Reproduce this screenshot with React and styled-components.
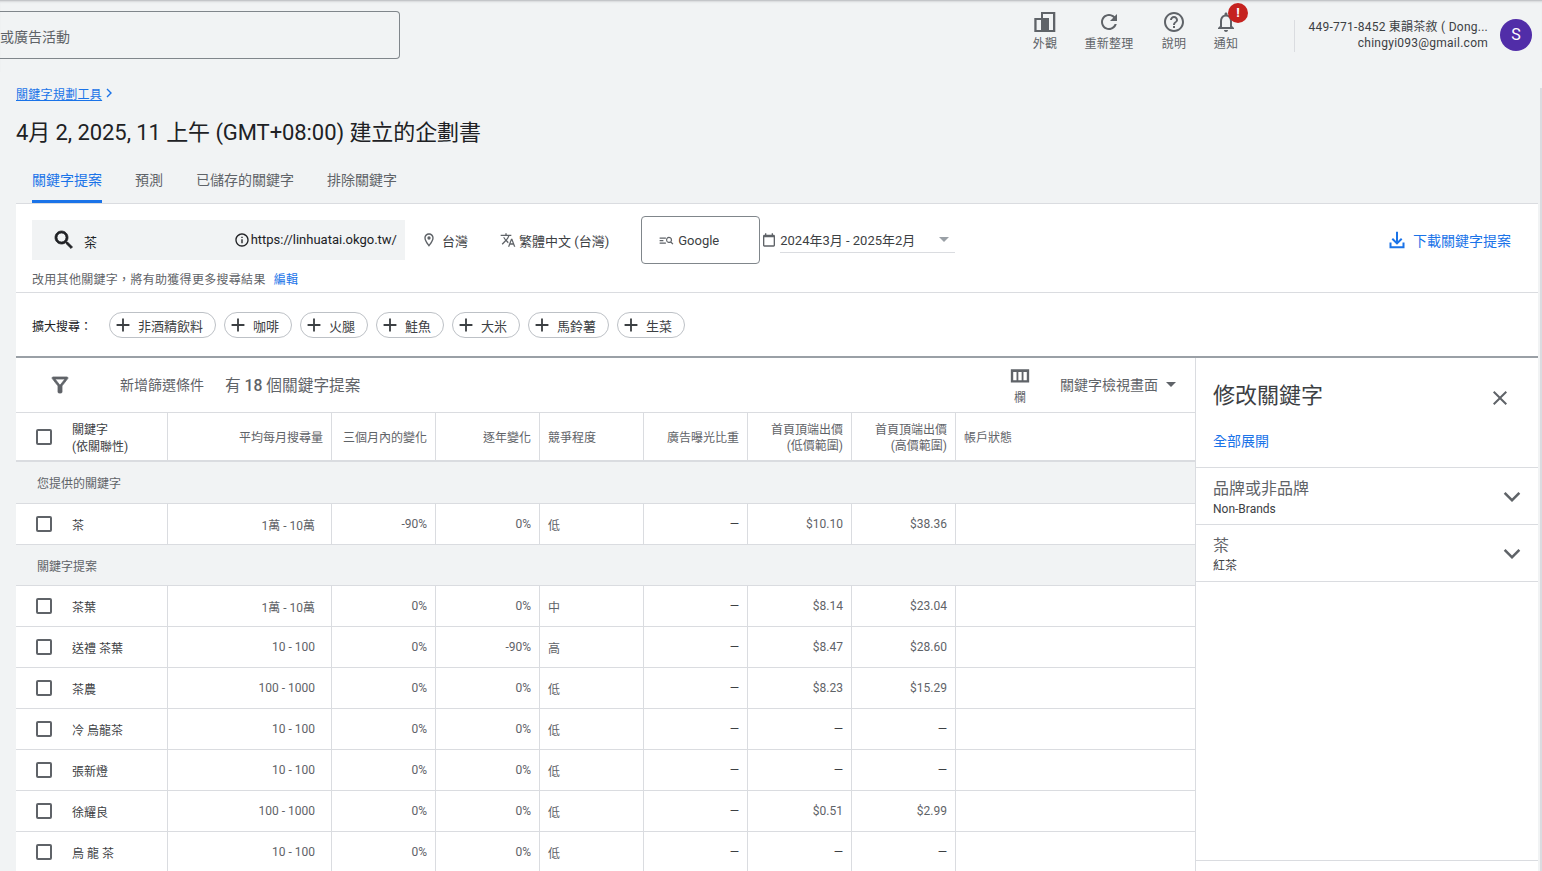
import React from 'react'
import styled, { createGlobalStyle } from 'styled-components'

const GlobalStyle = createGlobalStyle`
  html, body { margin: 0; padding: 0; height: 100%; overflow: hidden; background: #f1f3f4; }
  body { font-family: Roboto, "Noto Sans CJK TC", sans-serif; color: #3c4043; }
`

const paths = {
  refresh: 'M17.65 6.35C16.2 4.9 14.21 4 12 4c-4.42 0-7.99 3.58-7.99 8s3.57 8 7.99 8c3.73 0 6.84-2.55 7.73-6h-2.08c-.82 2.33-3.04 4-5.65 4-3.31 0-6-2.69-6-6s2.69-6 6-6c1.66 0 3.14.69 4.22 1.78L13 11h7V4l-2.35 2.35z',
  help: 'M11 18h2v-2h-2v2zm1-16C6.48 2 2 6.48 2 12s4.48 10 10 10 10-4.48 10-10S17.52 2 12 2zm0 18c-4.41 0-8-3.59-8-8s3.59-8 8-8 8 3.59 8 8-3.59 8-8 8zm0-14c-2.21 0-4 1.79-4 4h2c0-1.1.9-2 2-2s2 .9 2 2c0 2-3 1.75-3 5h2c0-2.25 3-2.5 3-5 0-2.21-1.79-4-4-4z',
  bell: 'M12 22c1.1 0 2-.9 2-2h-4c0 1.1.89 2 2 2zm6-6v-5c0-3.07-1.64-5.64-4.5-6.32V4c0-.83-.67-1.5-1.5-1.5s-1.5.67-1.5 1.5v.68C7.63 5.36 6 7.92 6 11v5l-2 2v1h16v-1l-2-2zm-2 1H8v-6c0-2.48 1.51-4.5 4-4.5s4 2.02 4 4.5v6z',
  appearance: 'M1.3 8H8V2h14.3v20H1.3V8zM3.6 10v10H8V10H3.6zM10 4v4h6v12h4V4H10z',
  search: 'M15.5 14h-.79l-.28-.27C15.41 12.59 16 11.11 16 9.5 16 5.91 13.09 3 9.5 3S3 5.91 3 9.5 5.91 16 9.5 16c1.61 0 3.09-.59 4.23-1.57l.27.28v.79l5 4.99L20.49 19l-4.99-5zm-6 0C7.01 14 5 11.99 5 9.5S7.01 5 9.5 5 14 7.01 14 9.5 11.99 14 9.5 14z',
  info: 'M11 7h2v2h-2zm0 4h2v6h-2zm1-9C6.48 2 2 6.48 2 12s4.48 10 10 10 10-4.48 10-10S17.52 2 12 2zm0 18c-4.41 0-8-3.59-8-8s3.59-8 8-8 8 3.59 8 8-3.59 8-8 8z',
  place: 'M12 2C8.13 2 5 5.13 5 9c0 5.25 7 13 7 13s7-7.75 7-13c0-3.87-3.13-7-7-7zM7 9c0-2.76 2.24-5 5-5s5 2.24 5 5c0 2.88-2.88 7.19-5 9.88C9.92 16.21 7 11.85 7 9zm5-2.5a2.5 2.5 0 1 0 0 5 2.5 2.5 0 0 0 0-5z',
  translate: 'M12.87 15.07l-2.54-2.51.03-.03c1.74-1.94 2.98-4.17 3.71-6.53H17V4h-7V2H8v2H1v1.99h11.17C11.5 7.92 10.44 9.75 9 11.35 8.07 10.32 7.3 9.19 6.69 8h-2c.73 1.63 1.73 3.17 2.98 4.56l-5.09 5.02L4 19l5-5 3.11 3.11.76-2.04zM18.5 10h-2L12 22h2l1.12-3h4.75L21 22h2l-4.5-12zm-2.62 7l1.62-4.33L19.12 17h-3.24z',
  network: 'M1 7h10v2H1V7zm0 4h6v2H1v-2zm0 4h10v2H1v-2zM16 6a5 5 0 0 1 4 8l3 3-1.4 1.4-3-3A5 5 0 1 1 16 6zm0 2a3 3 0 1 0 0 6 3 3 0 0 0 0-6z',
  calendar: 'M19 4h-1V2h-2v2H8V2H6v2H5c-1.11 0-2 .9-2 2v14c0 1.1.89 2 2 2h14c1.1 0 2-.9 2-2V6c0-1.1-.9-2-2-2zm0 16H5V8h14v12z',
  download: 'M10.8 2h2.4v11.2l3.6-3.6 1.7 1.7L12 17.8l-6.5-6.5 1.7-1.7 3.6 3.6V2zM3 15h2.4v4.6h13.2V15H21v7H3v-7z',
  filter: 'M7 6h10l-5.01 6.3L7 6zm-2.75-.39C6.27 8.2 10 13 10 13v6c0 .55.45 1 1 1h2c.55 0 1-.45 1-1v-6s3.73-4.8 5.75-7.39C20.26 4.95 19.79 4 18.95 4H5.04c-.83 0-1.3.95-.79 1.61z',
  columns: 'M2 4.5h20v14.5H2V4.5zM4.6 7.5v9h3.6v-9H4.6zm5.6 0v9h3.6v-9h-3.6zm5.6 0v9h3.6v-9h-3.6z',
  close: 'M19 6.41L17.59 5 12 10.59 6.41 5 5 6.41 10.59 12 5 17.59 6.41 19 12 13.41 17.59 19 19 17.59 13.41 12z',
  chevron: 'M3.4 6.6L12 15.2l8.6-8.6L23 9 12 20 1 9z',
  plus: 'M19 13h-6v6h-2v-6H5v-2h6V5h2v6h6v2z',
}

const Svg = styled.svg`
  display: block;
  flex: none;
  width: ${p => p.$size}px;
  height: ${p => p.$size}px;
  fill: ${p => p.$color};
  stroke: ${p => (p.$bold ? p.$color : 'none')};
  stroke-width: ${p => (p.$bold ? 0.8 : 0)};
`

const Icon = ({ name, size = 24, color = '#5f6368', bold }) => (
  <Svg viewBox="0 0 24 24" $size={size} $color={color} $bold={bold}>
    <path d={paths[name]} fillRule="evenodd" />
  </Svg>
)

const Page = styled.div`
  position: relative;
  width: 1542px;
  height: 871px;
  overflow: hidden;
  display: flex;
  flex-direction: column;
  background: #f1f3f4;
`

const EdgeLine = styled.div`
  position: absolute;
  top: 88px;
  right: 0;
  bottom: 0;
  width: 2px;
  background: #dadce0;
`

const TopBar = styled.header`
  flex: none;
  height: 72px;
  box-sizing: border-box;
  display: flex;
  align-items: flex-start;
  border-top: 1px solid #c4c6c9;
  box-shadow: inset 0 2px 2px -1px #d5d7da;
  padding: 10px 10px 0 0;
`

const AccountSearch = styled.div`
  width: 400px;
  height: 48px;
  box-sizing: border-box;
  border: 1px solid #80868b;
  border-left: none;
  border-radius: 0 4px 4px 0;
  display: flex;
  align-items: center;
  padding-top: 2px;
  font-size: 14px;
  color: #5f6368;
`

const ToolGroup = styled.div`
  margin-left: auto;
  display: flex;
  position: relative;
  margin-top: -1px;
`

const Tool = styled.div`
  width: ${p => p.$w}px;
  display: flex;
  flex-direction: column;
  align-items: center;
  gap: 2px;
  font-size: 12px;
  line-height: 16px;
  letter-spacing: 0.2px;
  color: #5f6368;
  position: relative;
`

const Badge = styled.span`
  position: absolute;
  top: -7px;
  left: 21px;
  width: 20px;
  height: 20px;
  border-radius: 50%;
  background: #c5221f;
  color: #fff;
  font-size: 13px;
  font-weight: 700;
  line-height: 20px;
  text-align: center;
`

const Divider = styled.div`
  width: 1px;
  height: 32px;
  margin: 9px 13px 0 49px;
  background: #dadce0;
`

const Account = styled.div`
  width: 180px;
  margin-top: 8px;
  font-size: 12px;
  line-height: 16px;
  color: #3c4043;
  letter-spacing: 0.25px;
`

const AccountLine = styled.div`
  display: flex;
  justify-content: flex-end;
  white-space: pre;
`

const Avatar = styled.div`
  width: 32px;
  height: 32px;
  margin: 8px 0 0 12px;
  border-radius: 50%;
  background: #512da8;
  color: #fff;
  font-size: 16px;
  line-height: 32px;
  text-align: center;
`

const PageHead = styled.div`
  flex: none;
  padding: 13px 0 0 16px;
`

const Crumb = styled.div`
  display: flex;
  align-items: center;
  height: 16px;
  font-size: 12px;
  letter-spacing: 0.3px;
  color: #1a73e8;
  span { text-decoration: underline; }
  svg { margin-left: 2px; }
`

const Title = styled.h1`
  margin: 16px 0 0;
  height: 32px;
  font-size: 22px;
  line-height: 32px;
  font-weight: 400;
  letter-spacing: -0.08px;
  color: #202124;
`

const Tabs = styled.div`
  display: flex;
  margin: 9px 4px 0 0;
  height: 45px;
  padding-left: 16px;
  gap: 33px;
  border-bottom: 1px solid #dadce0;
`

const Tab = styled.div`
  height: 45px;
  box-sizing: border-box;
  padding-top: 12px;
  font-size: 14px;
  line-height: 20px;
  color: ${p => (p.$active ? '#1a73e8' : '#5f6368')};
  border-bottom: 3px solid ${p => (p.$active ? '#1a73e8' : 'transparent')};
`

const Sheet = styled.main`
  flex: 1;
  min-height: 0;
  margin: 0 4px 0 16px;
  background: #fff;
  display: flex;
  flex-direction: column;
`

const SearchArea = styled.section`
  flex: none;
  height: 89px;
  box-sizing: border-box;
  padding: 12px 27px 0 16px;
  border-bottom: 1px solid #dadce0;
`

const SearchRow = styled.div`
  display: flex;
  align-items: center;
  height: 48px;
`

const SeedBox = styled.div`
  width: 373px;
  height: 40px;
  box-sizing: border-box;
  padding: 0 8px 0 20px;
  background: #f1f3f4;
  display: flex;
  align-items: center;
  font-size: 13px;
  color: #202124;
`

const SeedWord = styled.span`
  margin-left: 8px;
  flex: 1;
  padding-top: 2px;
`

const SeedUrl = styled.span`
  font-size: 13px;
  margin: -1px 0 0 1px;
`

const Option = styled.div`
  display: flex;
  align-items: center;
  gap: ${p => p.$gap || 4}px;
  margin-left: ${p => p.$ml}px;
  font-size: 13px;
  color: #3c4043;
`

const NetworkBox = styled.div`
  width: 119px;
  height: 48px;
  box-sizing: border-box;
  margin-left: 32px;
  padding-left: 17px;
  border: 1px solid #80868b;
  border-radius: 4px;
  display: flex;
  align-items: center;
  gap: 4px;
  font-size: 13px;
  color: #3c4043;
`

const DateSelect = styled.div`
  width: 175px;
  height: 24px;
  margin: 2px 0 0 3px;
  box-sizing: border-box;
  border-bottom: 1px solid #dadce0;
  display: flex;
  align-items: center;
  justify-content: space-between;
  padding: 0 6px 3px 0;
  font-size: 13px;
  color: #3c4043;
`

const Caret = styled.span`
  display: block;
  width: 0;
  height: 0;
  border-left: 5px solid transparent;
  border-right: 5px solid transparent;
  border-top: 5px solid ${p => p.$color || '#9aa0a6'};
`

const Download = styled.div`
  margin-left: auto;
  display: flex;
  align-items: center;
  gap: 6px;
  font-size: 14px;
  color: #1a73e8;
`

const Hint = styled.div`
  margin-top: 8px;
  font-size: 12px;
  letter-spacing: 0.3px;
  line-height: 16px;
  color: #5f6368;
  a { color: #1a73e8; margin-left: 8px; }
`

const BroadenRow = styled.section`
  flex: none;
  height: 65px;
  box-sizing: border-box;
  padding: 1px 0 0 16px;
  display: flex;
  align-items: center;
  gap: 8px;
  border-bottom: 2px solid #9aa0a6;
`

const BroadenLabel = styled.span`
  width: 69px;
  font-size: 12px;
  color: #202124;
`

const Chip = styled.div`
  height: 26px;
  box-sizing: border-box;
  padding: 0 12px 0 2px;
  border: 1px solid #bdc1c6;
  border-radius: 13px;
  display: flex;
  align-items: center;
  gap: 4px;
  font-size: 13px;
  color: #3c4043;
  background: #fff;
`

const Workspace = styled.div`
  flex: 1;
  min-height: 0;
  display: flex;
`

const TablePane = styled.div`
  width: 1179px;
  flex: none;
  overflow: hidden;
`

const Toolbar = styled.div`
  height: 54px;
  display: flex;
  align-items: center;
  padding-left: 32px;
  border-bottom: 1px solid #dadce0;
`

const FilterLabel = styled.span`
  margin: -2px 0 0 48px;
  font-size: 14px;
  color: #5f6368;
`

const Count = styled.span`
  margin: -2px 0 0 21px;
  font-size: 15.7px;
  color: #5f6368;
  b { font-weight: 500; }
`

const ColumnsBtn = styled.div`
  margin: 0 0 0 auto;
  width: 30px;
  display: flex;
  flex-direction: column;
  align-items: center;
  gap: 3px;
  font-size: 12px;
  line-height: 16px;
  color: #5f6368;
`

const ViewSelect = styled.div`
  width: 135px;
  margin: -2px 0 0 25px;
  display: flex;
  align-items: center;
  gap: 8px;
  font-size: 14px;
  color: #5f6368;
`

const Row = styled.div`
  display: grid;
  grid-template-columns: 152px 164px 104px 104px 104px 104px 104px 104px 1fr;
  height: ${p => p.$h || 41}px;
  box-sizing: border-box;
  border-bottom: ${p => (p.$head ? '2px solid #dadce0' : '1px solid #dadce0')};
`

const Cell = styled.div`
  box-sizing: border-box;
  display: flex;
  align-items: center;
  justify-content: ${p => (p.$left ? 'flex-start' : 'flex-end')};
  padding: 0 ${p => p.$pr ?? 8}px 0 8px;
  border-right: 1px solid #dadce0;
  font-size: 12px;
  color: #5f6368;
  &:last-child { border-right: none; }
`

const HeadCell = styled(Cell)`
  line-height: 16px;
  text-align: ${p => (p.$left ? 'left' : 'right')};
  padding-top: 2px;
`

const KeywordCell = styled(Cell)`
  justify-content: flex-start;
  padding-left: 20px;
  gap: 20px;
  color: #3c4043;
`

const Checkbox = styled.span`
  display: block;
  flex: none;
  width: 16px;
  height: 16px;
  box-sizing: border-box;
  border: 2px solid #5f6368;
  border-radius: 2px;
`

const Dash = styled.span`
  color: #3c4043;
`

const GroupRow = styled.div`
  height: ${p => p.$h || 42}px;
  box-sizing: border-box;
  padding-left: 21px;
  display: flex;
  align-items: center;
  background: #f1f3f4;
  border-bottom: 1px solid #dadce0;
  font-size: 12px;
  color: #5f6368;
`

const SidePane = styled.aside`
  flex: 1;
  min-width: 0;
  border-left: 1px solid #dadce0;
  display: flex;
  flex-direction: column;
`

const SideHead = styled.div`
  height: 110px;
  box-sizing: border-box;
  padding: 22px 26px 0 17px;
  border-bottom: 1px solid #dadce0;
`

const SideTitleRow = styled.div`
  display: flex;
  align-items: center;
  justify-content: space-between;
  svg { margin-top: 4px; }
`

const SideTitle = styled.h2`
  margin: 0;
  font-size: 22px;
  line-height: 32px;
  font-weight: 400;
  color: #3c4043;
`

const ExpandAll = styled.div`
  margin-top: 19px;
  font-size: 14px;
  line-height: 20px;
  color: #1a73e8;
`

const Facet = styled.div`
  height: 57px;
  box-sizing: border-box;
  padding: 0 17px;
  border-bottom: 1px solid #dadce0;
  display: flex;
  justify-content: space-between;
  align-items: center;
`

const FacetName = styled.div`
  font-size: 16px;
  line-height: 24px;
  color: #5f6368;
`

const FacetValue = styled.div`
  font-size: 12px;
  line-height: 16px;
  color: #3c4043;
`

const FacetText = styled.div`
  margin-top: 1px;
`

const SideSpacer = styled.div`
  flex: 1;
  border-bottom: 1px solid #dadce0;
  margin-bottom: 10px;
`

const chips = ['非酒精飲料', '咖啡', '火腿', '鮭魚', '大米', '馬鈴薯', '生菜']

const suggested = [
  ['茶葉', '1萬 - 10萬', '0%', '0%', '中', '$8.14', '$23.04'],
  ['送禮 茶葉', '10 - 100', '0%', '-90%', '高', '$8.47', '$28.60'],
  ['茶農', '100 - 1000', '0%', '0%', '低', '$8.23', '$15.29'],
  ['冷 烏龍茶', '10 - 100', '0%', '0%', '低', null, null],
  ['張新燈', '10 - 100', '0%', '0%', '低', null, null],
  ['徐耀良', '100 - 1000', '0%', '0%', '低', '$0.51', '$2.99'],
  ['烏 龍 茶', '10 - 100', '0%', '0%', '低', null, null],
]

const KeywordRow = ({ data }) => (
  <Row>
    <KeywordCell><Checkbox />{data[0]}</KeywordCell>
    <Cell $pr={16}>{data[1]}</Cell>
    <Cell>{data[2]}</Cell>
    <Cell>{data[3]}</Cell>
    <Cell $left>{data[4]}</Cell>
    <Cell><Dash>—</Dash></Cell>
    <Cell>{data[5] || <Dash>—</Dash>}</Cell>
    <Cell>{data[6] || <Dash>—</Dash>}</Cell>
    <Cell />
  </Row>
)

const App = () => {
  return (
    <Page>
      <GlobalStyle />
      <EdgeLine />
      <TopBar>
        <AccountSearch>或廣告活動</AccountSearch>
        <ToolGroup>
          <Tool $w={64}><Icon name="appearance" />外觀</Tool>
          <Tool $w={64}><Icon name="refresh" />重新整理</Tool>
          <Tool $w={66}><Icon name="help" />說明</Tool>
          <Tool $w={38}>
            <Icon name="bell" />
            通知
            <Badge>!</Badge>
          </Tool>
        </ToolGroup>
        <Divider />
        <Account>
          <AccountLine>449-771-8452 東韻茶敘 ( Dong...</AccountLine>
          <AccountLine>chingyi093@gmail.com</AccountLine>
        </Account>
        <Avatar>S</Avatar>
      </TopBar>

      <PageHead>
        <Crumb>
          <span>關鍵字規劃工具</span>
          <svg width="10" height="10" viewBox="0 0 10 10">
            <path d="M3 1l4 4-4 4" fill="none" stroke="#1a73e8" strokeWidth="1.4" />
          </svg>
        </Crumb>
        <Title>4月 2, 2025, 11 上午 (GMT+08:00) 建立的企劃書</Title>
        <Tabs>
          <Tab $active>關鍵字提案</Tab>
          <Tab>預測</Tab>
          <Tab>已儲存的關鍵字</Tab>
          <Tab>排除關鍵字</Tab>
        </Tabs>
      </PageHead>

      <Sheet>
        <SearchArea>
          <SearchRow>
            <SeedBox>
              <Icon name="search" color="#202124" bold />
              <SeedWord>茶</SeedWord>
              <Icon name="info" size={16} color="#202124" />
              <SeedUrl>https://linhuatai.okgo.tw/</SeedUrl>
            </SeedBox>
            <Option $ml={16} $gap={5}><Icon name="place" size={16} />台灣</Option>
            <Option $ml={32} $gap={3}><Icon name="translate" size={16} />繁體中文 (台灣)</Option>
            <NetworkBox><Icon name="network" size={15} />Google</NetworkBox>
            <Option $ml={1}><Icon name="calendar" size={16} /></Option>
            <DateSelect>2024年3月 - 2025年2月<Caret /></DateSelect>
            <Download><Icon name="download" size={20} color="#1a73e8" />下載關鍵字提案</Download>
          </SearchRow>
          <Hint>改用其他關鍵字，將有助獲得更多搜尋結果<a>編輯</a></Hint>
        </SearchArea>

        <BroadenRow>
          <BroadenLabel>擴大搜尋：</BroadenLabel>
          {chips.map(c => (
            <Chip key={c}><Icon name="plus" size={22} color="#3c4043" />{c}</Chip>
          ))}
        </BroadenRow>

        <Workspace>
          <TablePane>
            <Toolbar>
              <Icon name="filter" size={24} bold />
              <FilterLabel>新增篩選條件</FilterLabel>
              <Count>有 <b>18</b> 個關鍵字提案</Count>
              <ColumnsBtn><Icon name="columns" size={22} />欄</ColumnsBtn>
              <ViewSelect>關鍵字檢視畫面<Caret $color="#5f6368" /></ViewSelect>
            </Toolbar>
            <Row $h={49} $head>
              <KeywordCell>
                <Checkbox />
                <div>關鍵字<br />(依關聯性)</div>
              </KeywordCell>
              <HeadCell>平均每月搜尋量</HeadCell>
              <HeadCell>三個月內的變化</HeadCell>
              <HeadCell>逐年變化</HeadCell>
              <HeadCell $left>競爭程度</HeadCell>
              <HeadCell>廣告曝光比重</HeadCell>
              <HeadCell>首頁頂端出價<br />(低價範圍)</HeadCell>
              <HeadCell>首頁頂端出價<br />(高價範圍)</HeadCell>
              <HeadCell $left>帳戶狀態</HeadCell>
            </Row>
            <GroupRow>您提供的關鍵字</GroupRow>
            <KeywordRow data={['茶', '1萬 - 10萬', '-90%', '0%', '低', '$10.10', '$38.36']} />
            <GroupRow $h={41}>關鍵字提案</GroupRow>
            {suggested.map(s => <KeywordRow key={s[0]} data={s} />)}
          </TablePane>

          <SidePane>
            <SideHead>
              <SideTitleRow>
                <SideTitle>修改關鍵字</SideTitle>
                <Icon name="close" size={24} color="#5f6368" />
              </SideTitleRow>
              <ExpandAll>全部展開</ExpandAll>
            </SideHead>
            <Facet>
              <FacetText>
                <FacetName>品牌或非品牌</FacetName>
                <FacetValue>Non-Brands</FacetValue>
              </FacetText>
              <Icon name="chevron" size={18} color="#5f6368" />
            </Facet>
            <Facet>
              <FacetText>
                <FacetName>茶</FacetName>
                <FacetValue>紅茶</FacetValue>
              </FacetText>
              <Icon name="chevron" size={18} color="#5f6368" />
            </Facet>
            <SideSpacer />
          </SidePane>
        </Workspace>
      </Sheet>
    </Page>
  )
}

export default App
